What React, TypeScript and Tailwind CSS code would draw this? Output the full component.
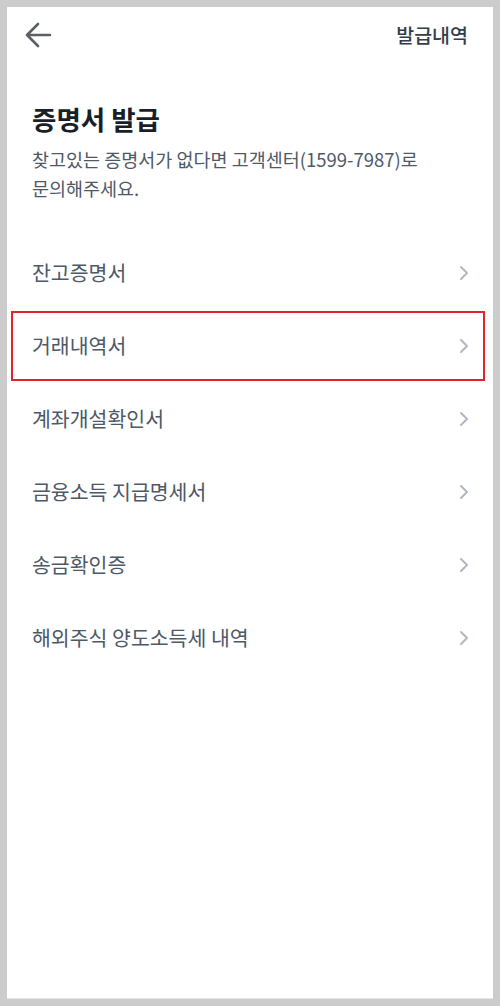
import { ReactNode } from "react";

const items = [
  "잔고증명서",
  "거래내역서",
  "계좌개설확인서",
  "금융소득 지급명세서",
  "송금확인증",
  "해외주식 양도소득세 내역",
];

function Chevron() {
  return (
    <svg width="10" height="16" viewBox="0 0 10 16" fill="none">
      <polyline
        points="2,2 8,8 2,14"
        stroke="#b0b8c1"
        strokeWidth="2"
        strokeLinecap="round"
        strokeLinejoin="round"
      />
    </svg>
  );
}

function Row({ label, children }: { label: string; children?: ReactNode }) {
  return (
    <div className="relative flex h-[73px] items-center justify-between pl-[25px] pr-[24px]">
      <span className="text-[20.5px] text-[#4e5968]">{label}</span>
      <Chevron />
      {children}
    </div>
  );
}

export default function App() {
  return (
    <div
      className="h-[1006px] bg-[#cccccc] p-[7px]"
      style={{ fontFamily: '"Noto Sans CJK KR", "Noto Sans", sans-serif' }}
    >
      <div className="flex h-full flex-col border-b border-[#e6e6e6] bg-white">
        <header className="flex h-14 items-center justify-between pl-[17px] pr-[25px]">
          <svg width="28" height="26" viewBox="0 0 28 26" fill="none">
            <path
              d="M3 13H26M14 2L3 13L14 24"
              stroke="#5b5f66"
              strokeWidth="2.6"
              strokeLinecap="round"
              strokeLinejoin="round"
            />
          </svg>
          <span className="text-[19.5px] font-medium text-[#333d4b]">발급내역</span>
        </header>

        <section className="px-[25px] pt-[39px]">
          <h1 className="text-[26.5px] font-bold leading-[34px] text-[#191f28]">증명서 발급</h1>
          <p className="mt-[9px] text-[18.5px] leading-[29px] text-[#4e5968]">
            찾고있는 증명서가 없다면 고객센터(1599-7987)로
            <br />
            문의해주세요.
          </p>
        </section>

        <div className="mt-[33px]">
          {items.map((label, i) => (
            <Row key={label} label={label}>
              {i === 1 && (
                <div className="absolute bottom-[1px] left-[4px] right-[8px] top-[2px] border-2 border-[#e3232b]" />
              )}
            </Row>
          ))}
        </div>
      </div>
    </div>
  );
}
